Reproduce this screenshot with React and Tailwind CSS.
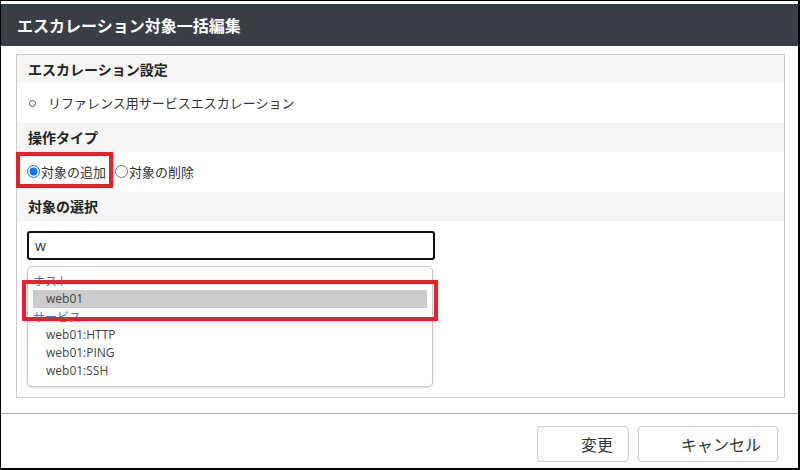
const font = { fontFamily: '"Noto Sans CJK JP", "Open Sans", sans-serif' };

function SectionHeader({ children, h = "h-[29px]" }) {
  return (
    <div className={`${h} bg-[#f5f5f5] pl-[11px] flex items-center text-[14px] font-bold text-[#222]`}>
      {children}
    </div>
  );
}

export default function App() {
  const services = ["web01:HTTP", "web01:PING", "web01:SSH"];

  return (
    <div
      className="relative w-[800px] h-[470px] bg-white border-black border-l border-t border-r-2 border-b-2 pt-[3px] flex flex-col"
      style={font}
    >
      {/* title bar */}
      <div className="h-[42px] bg-[#393d45] flex items-center pl-[16px] text-white text-[16px] font-bold">
        エスカレーション対象一括編集
      </div>

      {/* body panel */}
      <div className="ml-[15px] mt-[8px] w-[769px] border border-[#cccccc] flex flex-col">
        <SectionHeader h="h-[28px]">エスカレーション設定</SectionHeader>
        <div className="h-[40px] flex items-center pl-[12px] text-[13px] text-[#333]">
          <span className="w-[7px] h-[7px] rounded-full border-[1.5px] border-[#555] mr-[12px]" />
          リファレンス用サービスエスカレーション
        </div>

        <SectionHeader>操作タイプ</SectionHeader>
        <div className="h-[40px] flex items-center pl-[10px] pb-[1px] text-[13px] text-[#333]">
          <label className="flex items-center">
            <input type="radio" name="op" defaultChecked className="m-0 w-[13px] h-[13px]" />
            <span className="ml-[1px]">対象の追加</span>
          </label>
          <label className="flex items-center ml-[9px]">
            <input type="radio" name="op" className="m-0 w-[13px] h-[13px]" />
            <span className="ml-[1px]">対象の削除</span>
          </label>
        </div>

        <SectionHeader>対象の選択</SectionHeader>
        <div className="pt-[10px] pb-[10px] pl-[10px]">
          <div className="w-[408px] h-[29px] border-2 border-[#111] rounded-[3px] flex items-center pl-[6px] text-[14px] text-[#333]" style={{ fontFamily: '"Open Sans", sans-serif' }}>
            w
          </div>
          <div className="mt-[6px] w-[406px] border border-[#c8c8c8] rounded-[5px] shadow-[0_1px_2px_rgba(0,0,0,0.15)] pt-[5px] pb-[6px] px-[5px] text-[12px]">
            <div className="h-[18px] flex items-center text-[#3f7cc4]">ホスト</div>
            <div className="h-[18px] flex items-center bg-[#cccccc] pl-[13px] text-[#444]" style={{ fontFamily: '"Open Sans", sans-serif' }}>
              web01
            </div>
            <div className="h-[18px] flex items-center text-[#3f7cc4]">サービス</div>
            {services.map((s) => (
              <div key={s} className="h-[18px] flex items-center pl-[13px] text-[#444]" style={{ fontFamily: '"Open Sans", sans-serif' }}>
                {s}
              </div>
            ))}
          </div>
        </div>
      </div>

      {/* footer */}
      <div className="mt-[15px] border-t border-[#aaaaaa] flex justify-end gap-[9px] pt-[12px] pr-[20px]">
        <button className="h-[36px] w-[92px] border border-[#cccccc] rounded-[4px] bg-white text-[16px] text-[#333] pl-[43px] text-left">
          変更
        </button>
        <button className="h-[36px] w-[140px] border border-[#cccccc] rounded-[4px] bg-white text-[16px] text-[#333] pl-[42px] text-left">
          キャンセル
        </button>
      </div>

      {/* red annotation boxes */}
      <div className="absolute left-[15px] top-[151px] w-[97px] h-[36px] border-4 border-[#e8202a]" />
      <div className="absolute left-[21px] top-[279px] w-[416px] h-[41px] border-4 border-[#e8202a]" />
    </div>
  );
}
